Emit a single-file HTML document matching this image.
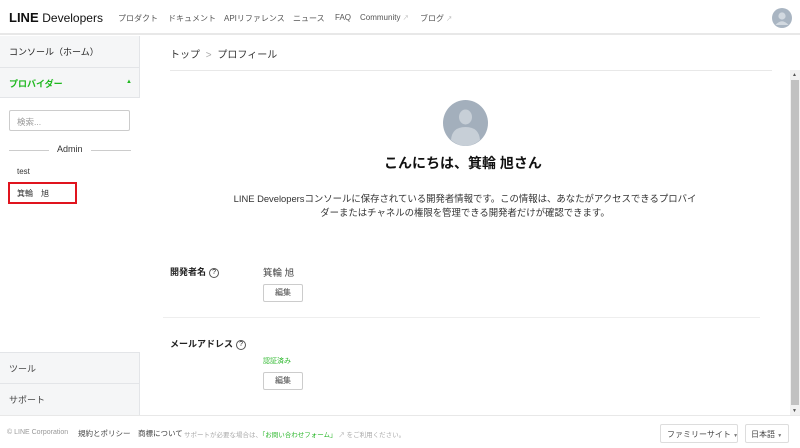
<!DOCTYPE html>
<html><head><meta charset="utf-8"><style>
*{margin:0;padding:0;box-sizing:border-box}
body{width:800px;height:448px;overflow:hidden;background:#fff;font-family:"Liberation Sans","Noto Sans CJK JP",sans-serif;color:#222;position:relative}
.a{position:absolute;white-space:nowrap}
.hdr{position:absolute;left:0;top:0;width:800px;height:35px;border-bottom:2px solid #e8e8e8;background:#fff}
.nav{font-size:8px;color:#555;top:13px}
.side{position:absolute;left:0;top:36px;width:140px;height:379px;background:#f5f6f7;border-right:1px solid #e3e5e8}
.btn{position:absolute;width:40px;height:18px;border:1px solid #ccc;border-radius:2px;font-size:8px;text-align:center;line-height:16px;color:#444;background:#fff}
.q{display:inline-block;width:10px;height:10px;border:1px solid #555;border-radius:50%;font-size:7px;line-height:8px;text-align:center;font-weight:normal;vertical-align:1px;margin-left:3px}
</style></head><body>
<div class="hdr"></div>
<div class="a" style="left:9px;top:10px;font-size:13px;color:#111"><b>LINE</b> <span style="font-size:12px">Developers</span></div>
<div class="a nav" style="left:118px">プロダクト</div>
<div class="a nav" style="left:168px">ドキュメント</div>
<div class="a nav" style="left:224px">APIリファレンス</div>
<div class="a nav" style="left:293px">ニュース</div>
<div class="a nav" style="left:335px">FAQ</div>
<div class="a nav" style="left:360px">Community <span style="color:#aaa;font-size:6px">↗</span></div>
<div class="a nav" style="left:420px">ブログ <span style="color:#aaa;font-size:6px">↗</span></div>
<svg class="a" style="left:772px;top:8px" width="20" height="20"><circle cx="10" cy="10" r="10" fill="#a9b5c2"/><circle cx="10" cy="8" r="3.6" fill="#d2d9e0"/><path d="M3.5 17 Q10 9.5 16.5 17 Z" fill="#d2d9e0"/></svg>

<div class="side"></div>
<div class="a" style="left:0;top:67px;width:140px;height:1px;background:#e3e5e8"></div>
<div class="a" style="left:0;top:97px;width:140px;height:1px;background:#e3e5e8"></div>
<div class="a" style="left:0;top:98px;width:140px;height:254px;background:#fff"></div>
<div class="a" style="left:0;top:352px;width:140px;height:1px;background:#e3e5e8"></div>
<div class="a" style="left:0;top:383px;width:140px;height:1px;background:#e3e5e8"></div>
<div class="a" style="left:9px;top:45px;font-size:9px;color:#222">コンソール（ホーム）</div>
<div class="a" style="left:9px;top:77px;font-size:9px;color:#1fb81f;font-weight:bold">プロバイダー</div>
<div class="a" style="left:126px;top:79px;font-size:6px;color:#1fb81f">▲</div>
<div class="a" style="left:9px;top:110px;width:121px;height:21px;border:1px solid #ccc;border-radius:2px;background:#fff;font-size:8.5px;color:#999;padding:5px 7px">検索...</div>
<div class="a" style="left:9px;top:150px;width:40px;height:1px;background:#ccc"></div>
<div class="a" style="left:91px;top:150px;width:40px;height:1px;background:#ccc"></div>
<div class="a" style="left:57px;top:144px;font-size:9px;color:#333">Admin</div>
<div class="a" style="left:17px;top:167px;font-size:8px;color:#333">test</div>
<div class="a" style="left:8px;top:182px;width:69px;height:22px;border:2px solid #e0141e"></div>
<div class="a" style="left:17px;top:188px;font-size:8px;color:#333">箕輪　旭</div>
<div class="a" style="left:9px;top:362px;font-size:9px;color:#444">ツール</div>
<div class="a" style="left:9px;top:393px;font-size:9px;color:#444">サポート</div>

<div class="a" style="left:170px;top:46px;font-size:10px;color:#333">トップ <span style="color:#aaa;margin:0 3px">&gt;</span> プロフィール</div>
<div class="a" style="left:170px;top:70px;width:602px;height:1px;background:#e8e8e8"></div>
<svg class="a" style="left:443px;top:100px" width="45" height="46"><ellipse cx="22.5" cy="23" rx="22.5" ry="23" fill="#a3afbc"/><ellipse cx="22.5" cy="17" rx="6.5" ry="7.5" fill="#c7cfd7"/><path d="M8 40 Q9 27 22.5 27 Q36 27 37 40 Q30 46 22.5 46 Q15 46 8 40Z" fill="#c7cfd7"/></svg>
<div class="a" style="left:0;width:926px;top:153px;text-align:center;font-size:14px;font-weight:bold;color:#111">こんにちは、箕輪 旭さん</div>
<div class="a" style="left:0;width:930px;top:192px;text-align:center;font-size:9.4px;line-height:14px;color:#333">LINE Developersコンソールに保存されている開発者情報です。この情報は、あなたがアクセスできるプロバイ<br>ダーまたはチャネルの権限を管理できる開発者だけが確認できます。</div>

<div class="a" style="left:170px;top:265px;font-size:9px;font-weight:bold;color:#222">開発者名<span class="q">?</span></div>
<div class="a" style="left:263px;top:265px;font-size:9.5px;color:#444">箕輪 旭</div>
<div class="btn" style="left:263px;top:284px">編集</div>
<div class="a" style="left:163px;top:317px;width:597px;height:1px;background:#eee"></div>
<div class="a" style="left:170px;top:337px;font-size:9px;font-weight:bold;color:#222">メールアドレス<span class="q">?</span></div>
<div class="a" style="left:263px;top:356px;font-size:7px;color:#2db82d">認証済み</div>
<div class="btn" style="left:263px;top:372px">編集</div>

<div class="a" style="left:790px;top:70px;width:10px;height:345px;background:#f1f1f1"></div>
<div class="a" style="left:791px;top:80px;width:8px;height:325px;background:#c1c1c1"></div>
<div class="a" style="left:792px;top:72px;font-size:5px;color:#555">▲</div>
<div class="a" style="left:792px;top:408px;font-size:5px;color:#555">▼</div>

<div class="a" style="left:0;top:415px;width:800px;height:1px;background:#e8e8e8"></div>
<div class="a" style="left:7px;top:429px;font-size:7px;color:#999">© LINE Corporation</div>
<div class="a" style="left:78px;top:428px;font-size:7.5px;color:#444">規約とポリシー　商標について</div>
<div class="a" style="left:184px;top:429px;font-size:6.5px;color:#aaa">サポートが必要な場合は、<span style="color:#2db82d">「お問い合わせフォーム」</span> ↗ をご利用ください。</div>
<div class="a" style="left:660px;top:424px;width:78px;height:19px;border:1px solid #ddd;border-radius:2px;font-size:8px;color:#444;padding:4px 6px">ファミリーサイト <span style="font-size:5px;color:#777">▼</span></div>
<div class="a" style="left:745px;top:424px;width:44px;height:19px;border:1px solid #ddd;border-radius:2px;font-size:8px;color:#444;padding:4px 5px">日本語 <span style="font-size:5px;color:#777">▼</span></div>
</body></html>
